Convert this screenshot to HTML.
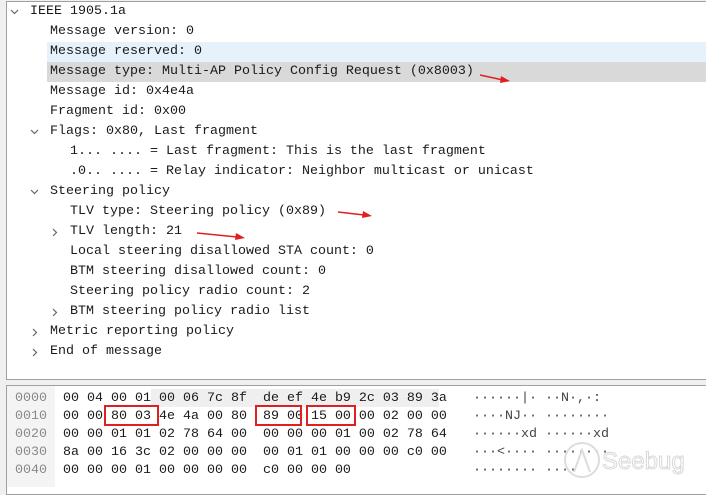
<!DOCTYPE html>
<html><head><style>
body{margin:0;width:706px;height:485px;background:#f0f0f0;position:relative;overflow:hidden;font-family:"Liberation Mono",monospace;font-size:13.33px;color:#1a1a1a}
#top{position:absolute;left:6px;top:-1px;width:710px;height:379px;background:#fff;border:1px solid #a0a0a0;box-sizing:border-box}
#bot{position:absolute;left:6px;top:383px;width:710px;height:110px;background:#fff;border:1px solid #a0a0a0;box-sizing:border-box}
.r{position:absolute;height:20px;line-height:20px;white-space:pre}
.t{margin-top:2px}
.h{position:absolute;height:18px;line-height:18px;white-space:pre}
.box{position:absolute;border:2px solid #e02020;box-sizing:border-box}
</style></head><body>
<div id="top"></div>
<div class="r" style="left:47px;top:40px;width:660px;background:#e5f1fb"></div>
<div class="r" style="left:47px;top:60px;width:660px;background:#d9d9d9"></div>
<svg style="position:absolute;left:0;top:0" width="706" height="380">
<g fill="none" stroke="#666" stroke-width="1.2">
<path d="M11 8l3.5 3.5L18 8"/><path d="M31 128l3.5 3.5L38 128"/><path d="M31 188l3.5 3.5L38 188"/>
<path d="M53 227l3.5 3.5L53 234"/><path d="M53 307l3.5 3.5L53 314"/>
<path d="M33 327l3.5 3.5L33 334"/><path d="M33 347l3.5 3.5L33 354"/>
</g>
<g stroke="#e02020" stroke-width="1.6" fill="#e02020">
<line x1="480" y1="73" x2="503" y2="78"/><path d="M510 79l-9 -5 -1 7z" stroke="none"/>
<line x1="338" y1="210" x2="364" y2="213"/><path d="M372 214l-9 -5 -1 7z" stroke="none"/>
<line x1="197" y1="231" x2="237" y2="235"/><path d="M245 236l-9 -5 -1 7z" stroke="none"/>
</g></svg>
<div class="t">
<div class="r" style="left:30px;top:0">IEEE 1905.1a</div>
<div class="r" style="left:50px;top:20px">Message version: 0</div>
<div class="r" style="left:50px;top:40px">Message reserved: 0</div>
<div class="r" style="left:50px;top:60px">Message type: Multi-AP Policy Config Request (0x8003)</div>
<div class="r" style="left:50px;top:80px">Message id: 0x4e4a</div>
<div class="r" style="left:50px;top:100px">Fragment id: 0x00</div>
<div class="r" style="left:50px;top:120px">Flags: 0x80, Last fragment</div>
<div class="r" style="left:70px;top:140px">1... .... = Last fragment: This is the last fragment</div>
<div class="r" style="left:70px;top:160px">.0.. .... = Relay indicator: Neighbor multicast or unicast</div>
<div class="r" style="left:50px;top:180px">Steering policy</div>
<div class="r" style="left:70px;top:200px">TLV type: Steering policy (0x89)</div>
<div class="r" style="left:70px;top:220px">TLV length: 21</div>
<div class="r" style="left:70px;top:240px">Local steering disallowed STA count: 0</div>
<div class="r" style="left:70px;top:260px">BTM steering disallowed count: 0</div>
<div class="r" style="left:70px;top:280px">Steering policy radio count: 2</div>
<div class="r" style="left:70px;top:300px">BTM steering policy radio list</div>
<div class="r" style="left:50px;top:320px">Metric reporting policy</div>
<div class="r" style="left:50px;top:340px">End of message</div>
</div>
<div id="bot"></div>
<div style="position:absolute;left:7px;top:384px;width:48px;height:101px;background:#f4f4f4"></div>
<div style="position:absolute;left:151px;top:387px;width:288px;height:18px;background:#efefef"></div>
<div class="h" style="left:15px;top:388px;color:#888">0000
0010
0020
0030
0040</div>
<div class="h" style="left:63px;top:388px">00 04 00 01 00 06 7c 8f  de ef 4e b9 2c 03 89 3a
00 00 80 03 4e 4a 00 80  89 00 15 00 00 02 00 00
00 00 01 01 02 78 64 00  00 00 00 01 00 02 78 64
8a 00 16 3c 02 00 00 00  00 01 01 00 00 00 c0 00
00 00 00 01 00 00 00 00  c0 00 00 00</div>
<div class="h" style="left:473px;top:388px;color:#444">······|· ··N·,·:
····NJ·· ········
······xd ······xd
···<···· ········
········ ····</div>
<div class="box" style="left:104px;top:403px;width:55px;height:21px"></div>
<div class="box" style="left:255px;top:403px;width:47px;height:21px"></div>
<div class="box" style="left:306px;top:403px;width:50px;height:21px"></div>
<svg style="position:absolute;left:560px;top:436px" width="130" height="44"><circle cx="22" cy="22" r="17" fill="none" stroke="#ddd" stroke-width="2"/><path d="M14 34L22 12 30 34" fill="none" stroke="#ddd" stroke-width="2"/><text x="42" y="31" font-family="Liberation Sans,sans-serif" font-size="24" fill="none" stroke="#d8d8d8" stroke-width="1">Seebug</text></svg>
</body></html>
